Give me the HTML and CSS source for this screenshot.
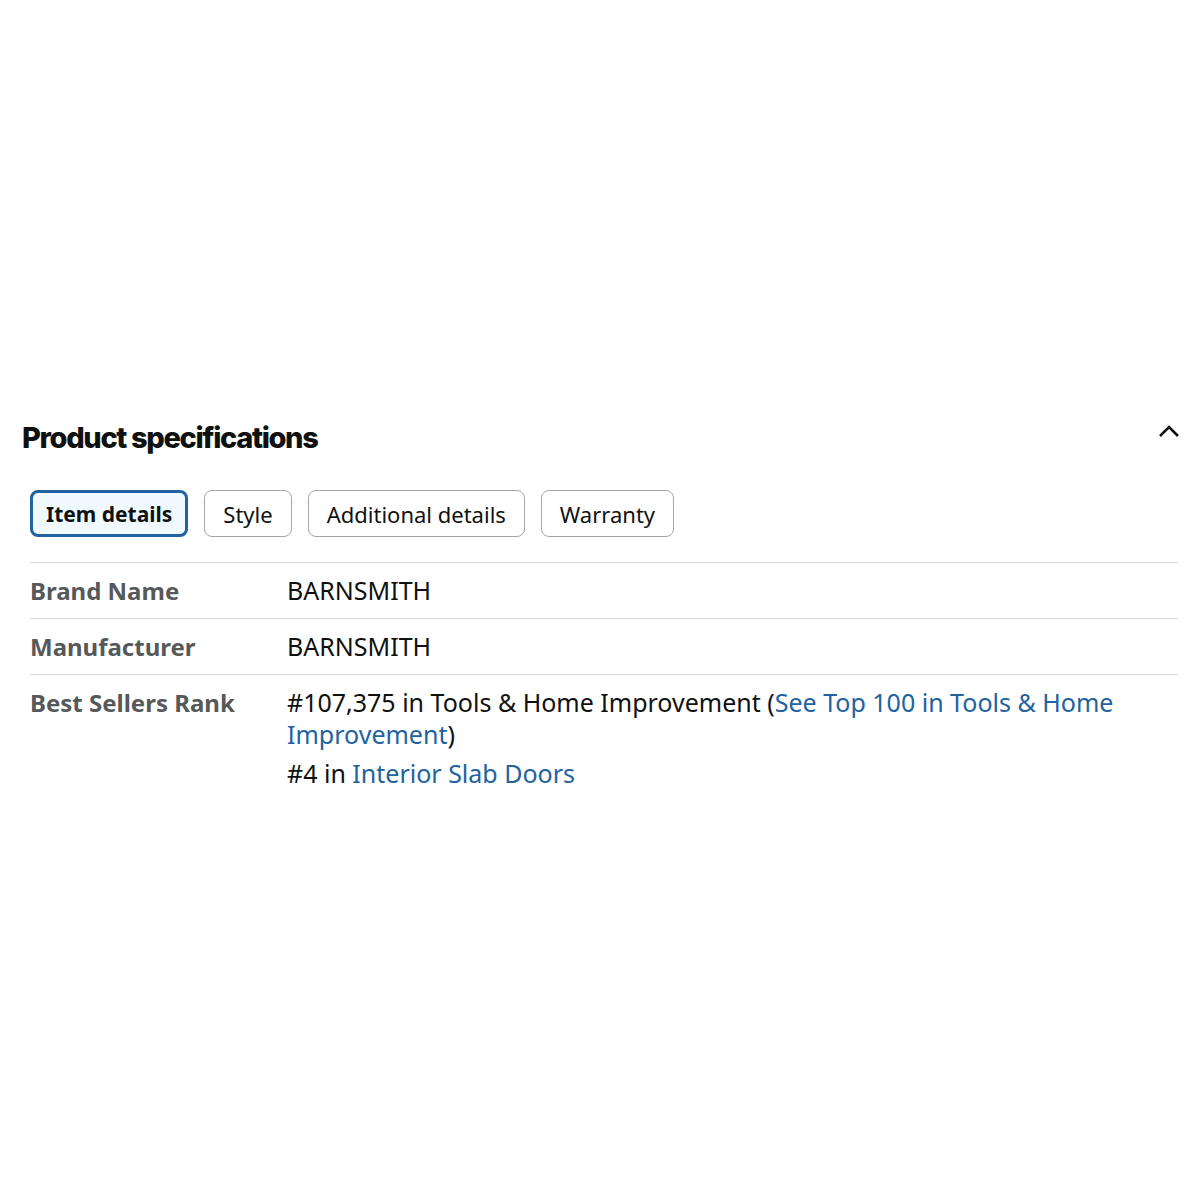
FILE: index.html
```html
<!DOCTYPE html>
<html>
<head>
<meta charset="utf-8">
<link rel="stylesheet" href="styles.css">
</head>
<body>
<section class="specs">
  <div class="head">
    <h2 class="title">Product specifications</h2>
    <svg class="chev" width="22" height="16" viewBox="0 0 22 16"><path d="M2 13 L11 4 L20 13" fill="none" stroke="#0f1111" stroke-width="2.6"/></svg>
  </div>
  <div class="tabs">
    <span class="tab active">Item details</span>
    <span class="tab">Style</span>
    <span class="tab">Additional details</span>
    <span class="tab">Warranty</span>
  </div>
  <div class="table">
    <div class="row">
      <div class="label">Brand Name</div>
      <div class="value">BARNSMITH</div>
    </div>
    <div class="row">
      <div class="label">Manufacturer</div>
      <div class="value">BARNSMITH</div>
    </div>
    <div class="row">
      <div class="label">Best Sellers Rank</div>
      <div class="value">
        <p class="line">#107,375 in Tools &amp; Home Improvement (<a class="link">See Top 100 in Tools &amp; Home Improvement</a>)</p>
        <p class="line">#4 in <a class="link">Interior Slab Doors</a></p>
      </div>
    </div>
  </div>
</section>
</body>
</html>
```
FILE: styles.css
```css
html, body {
  margin: 0;
  padding: 0;
  background: #fff;
}
body {
  font-family: "Noto Sans", "Open Sans", sans-serif;
  color: #0f1111;
}
.specs {
  padding: 418px 22px 0 22px;
}
.head {
  display: flex;
  justify-content: space-between;
  align-items: flex-start;
}
.title {
  margin: 0;
  font-family: Inter, "Noto Sans", sans-serif;
  font-weight: 800;
  font-size: 29px;
  letter-spacing: -1.35px;
  line-height: 40px;
  color: #0f1111;
}
.chev {
  margin-top: 5px;
  margin-right: -2px;
}
.tabs {
  display: flex;
  gap: 16px;
  margin: 32px 0 0 8px;
}
.tab {
  display: inline-flex;
  align-items: center;
  height: 47px;
  box-sizing: border-box;
  padding: 0 18px;
  border: 1px solid #a6a6a6;
  border-radius: 8px;
  font-size: 22px;
  color: #0f1111;
}
.tab.active {
  border: 3px solid #2162a1;
  background: #f0fafe;
  font-weight: 700;
  font-size: 21px;
  padding: 0 13px;
}
.table {
  margin: 25px 0 0 8px;
}
.row {
  display: flex;
  border-top: 1px solid #d5d9d9;
  padding: 11px 0 11px 0;
}
.label {
  width: 257px;
  flex: none;
  font-weight: 700;
  font-size: 24px;
  line-height: 33px;
  color: #565959;
}
.value {
  flex: 1;
  font-size: 25px;
  line-height: 33px;
}
.line {
  margin: 0 0 6px 0;
  line-height: 32px;
}
.line + .line {
  margin-top: 7px;
}
.link {
  color: #2162a1;
  text-decoration: none;
}
```
